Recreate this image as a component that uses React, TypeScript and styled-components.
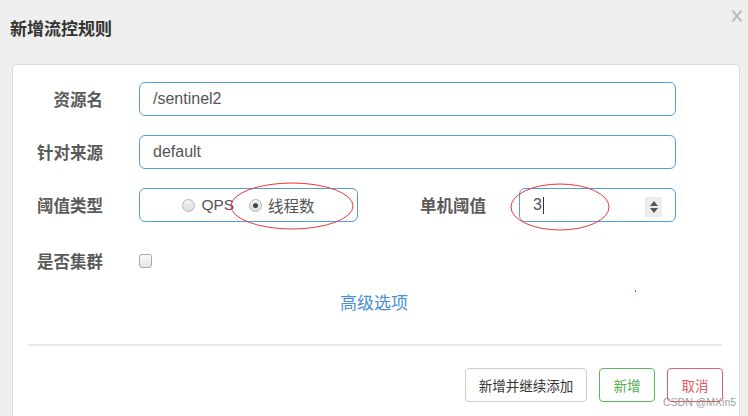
import React from "react";
import styled, { createGlobalStyle } from "styled-components";

const Global = createGlobalStyle`
  html, body { margin: 0; padding: 0; background: #efefef; }
  body { font-family: "Liberation Sans", "Noto Sans CJK SC", sans-serif; overflow: hidden; }
  * { box-sizing: border-box; }
`;

const Page = styled.div`
  position: relative;
  width: 748px;
  height: 416px;
  background: #efefef;
  overflow: hidden;
`;

const Header = styled.div`
  height: 64px;
  display: flex;
  align-items: flex-start;
  justify-content: space-between;
  padding: 17px 4px 0 10px;
`;

const Title = styled.h4`
  margin: 0;
  font-family: "Noto Sans CJK SC", sans-serif;
  font-size: 17px;
  line-height: 22px;
  font-weight: 700;
  color: #333;
`;

const Close = styled.button`
  border: 0;
  background: none;
  padding: 0;
  margin-top: -9px;
  width: 14px;
  height: 16px;
  cursor: pointer;
  display: flex;
  align-items: center;
  justify-content: center;
`;

const Card = styled.div`
  margin: 0 8px 0 12px;
  height: 400px;
  background: #fff;
  border: 1px solid #dcdcdc;
  border-radius: 4px;
  padding-top: 17px;
`;

const Form = styled.div`
  display: flex;
  flex-direction: column;
  gap: 19px;
`;

const Row = styled.div<{ $shift?: number }>`
  display: flex;
  align-items: center;
  height: 34px;
  margin-top: ${(p) => p.$shift ?? 0}px;
`;

const Label = styled.label<{ $w: number; $gap: number }>`
  width: ${(p) => p.$w}px;
  margin-right: ${(p) => p.$gap}px;
  text-align: right;
  font-family: "Noto Sans CJK SC", sans-serif;
  font-size: 16.5px;
  font-weight: 700;
  color: #5a5a5a;
  white-space: nowrap;
`;

const Input = styled.div<{ $w: number }>`
  position: relative;
  width: ${(p) => p.$w}px;
  height: 34px;
  border: 1px solid #5b9bd5;
  border-radius: 6px;
  display: flex;
  align-items: center;
  padding: 0 13px;
  font-size: 16px;
  color: #555;
`;

const RadioBox = styled.div`
  width: 219px;
  height: 34px;
  border: 1px solid #5b9bd5;
  border-radius: 6px;
  display: flex;
  align-items: center;
  justify-content: center;
  gap: 15px;
`;

const RadioItem = styled.span`
  display: flex;
  align-items: center;
  gap: 6px;
  font-family: "Liberation Sans", "Noto Sans CJK SC", sans-serif;
  font-size: 15.5px;
  color: #555;
`;

const RadioDot = styled.span<{ $on?: boolean }>`
  width: 13px;
  height: 13px;
  border-radius: 50%;
  border: 1px solid #b5b5b5;
  background: linear-gradient(#f4f4f4, #dcdcdc);
  display: flex;
  align-items: center;
  justify-content: center;
  &::after {
    content: "";
    width: 5px;
    height: 5px;
    border-radius: 50%;
    background: ${(p) => (p.$on ? "#444" : "transparent")};
  }
`;

const Caret = styled.span`
  display: inline-block;
  width: 1px;
  height: 17px;
  background: #333;
  margin-left: 1px;
`;

const Spinner = styled.span`
  position: absolute;
  right: 13px;
  top: 8px;
  width: 17px;
  height: 20px;
  background: #ececec;
  display: flex;
  flex-direction: column;
  align-items: center;
  justify-content: center;
  gap: 2px;
`;

const Tri = styled.span<{ $up?: boolean }>`
  width: 0;
  height: 0;
  border-left: 4px solid transparent;
  border-right: 4px solid transparent;
  ${(p) => (p.$up ? "border-bottom: 5px solid #555;" : "border-top: 5px solid #555;")}
`;

const Checkbox = styled.span`
  width: 13px;
  height: 14px;
  border: 1px solid #a9a9a9;
  border-radius: 3px;
  background: linear-gradient(#fbfbfb, #e4e4e4);
`;

const Advanced = styled.a`
  display: block;
  text-align: center;
  margin: 12px 0 0;
  font-family: "Noto Sans CJK SC", sans-serif;
  font-size: 17px;
  line-height: 24px;
  color: #4a8fd6;
  text-decoration: none;
  padding-right: 4px;
`;

const Divider = styled.hr`
  margin: 30px 17px 0 15px;
  border: 0;
  border-top: 2px solid #e8e8e8;
`;

const Footer = styled.div`
  display: flex;
  justify-content: flex-end;
  gap: 12px;
  padding: 22px 16px 0 0;
`;

const Btn = styled.button<{ $kind: "default" | "ok" | "cancel"; $w: number }>`
  width: ${(p) => p.$w}px;
  height: 34px;
  background: #fff;
  border-radius: 4px;
  font-family: "Noto Sans CJK SC", sans-serif;
  font-size: 13.5px;
  padding: 0;
  border: 1px solid
    ${(p) => (p.$kind === "ok" ? "#5cb85c" : p.$kind === "cancel" ? "#e0616c" : "#cccccc")};
  color: ${(p) => (p.$kind === "ok" ? "#4cae4c" : p.$kind === "cancel" ? "#e35866" : "#333")};
`;

const Annotations = styled.svg`
  position: absolute;
  left: 0;
  top: 0;
  pointer-events: none;
`;

const Watermark = styled.span`
  position: absolute;
  left: 663px;
  top: 395px;
  font-family: "Liberation Sans", sans-serif;
  font-size: 10.5px;
  line-height: 14px;
  color: rgba(120, 120, 120, 0.75);
`;

export default function App() {
  return (
    <Page>
      <Global />
      <Header>
        <Title>新增流控规则</Title>
        <Close aria-label="close">
          <svg width="12" height="14" viewBox="0 0 12 14">
            <path d="M1.5 1.5 L10.5 12.5 M10.5 1.5 L1.5 12.5" stroke="#bdbdbd" strokeWidth="2" fill="none" />
          </svg>
        </Close>
      </Header>
      <Card>
        <Form>
          <Row>
            <Label $w={90} $gap={36}>资源名</Label>
            <Input $w={537}>/sentinel2</Input>
          </Row>
          <Row>
            <Label $w={90} $gap={36}>针对来源</Label>
            <Input $w={537}>default</Input>
          </Row>
          <Row>
            <Label $w={90} $gap={36}>阈值类型</Label>
            <RadioBox>
              <RadioItem>
                <RadioDot />
                QPS
              </RadioItem>
              <RadioItem>
                <RadioDot $on />
                线程数
              </RadioItem>
            </RadioBox>
            <Label $w={128} $gap={33}>单机阈值</Label>
            <Input $w={157}>
              3<Caret />
              <Spinner>
                <Tri $up />
                <Tri />
              </Spinner>
            </Input>
          </Row>
          <Row $shift={3}>
            <Label $w={90} $gap={36}>是否集群</Label>
            <Checkbox />
          </Row>
        </Form>
        <Advanced>高级选项</Advanced>
        <Divider />
        <Footer>
          <Btn $kind="default" $w={122}>新增并继续添加</Btn>
          <Btn $kind="ok" $w={56}>新增</Btn>
          <Btn $kind="cancel" $w={56}>取消</Btn>
        </Footer>
      </Card>
      <Annotations width="748" height="416" viewBox="0 0 748 416">
        <ellipse cx="292" cy="206" rx="61" ry="23" fill="none" stroke="#e8383d" strokeWidth="1" />
        <ellipse cx="560" cy="207" rx="49" ry="23" fill="none" stroke="#e8383d" strokeWidth="1" />
        <rect x="635" y="290" width="1" height="2" fill="#e8383d" />
      </Annotations>
      <Watermark>CSDN @MXin5</Watermark>
    </Page>
  );
}
